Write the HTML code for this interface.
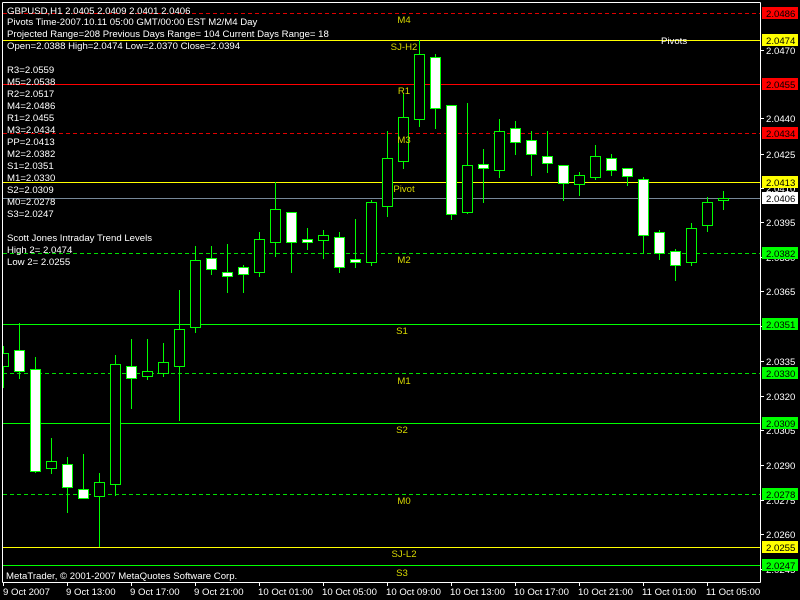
<!DOCTYPE html>
<html><head><meta charset="utf-8"><style>
html,body{margin:0;padding:0;background:#000;}
svg{display:block;}
text{font-family:"Liberation Sans","DejaVu Sans",sans-serif;font-size:9.6px;}
</style></head><body>
<svg width="800" height="600" viewBox="0 0 800 600" xmlns="http://www.w3.org/2000/svg">
<rect width="800" height="600" fill="#000"/>
<g shape-rendering="crispEdges">
<line x1="2.5" y1="2.5" x2="760.5" y2="2.5" stroke="#fff"/>
<line x1="760.5" y1="2.5" x2="760.5" y2="582.5" stroke="#fff"/>
<line x1="2.5" y1="582.5" x2="760.5" y2="582.5" stroke="#fff"/>
<line x1="3" y1="13.5" x2="760" y2="13.5" stroke="#e00000" stroke-dasharray="4,3"/>
<line x1="3" y1="40.5" x2="760" y2="40.5" stroke="#ffff00"/>
<line x1="3" y1="84.5" x2="760" y2="84.5" stroke="#ff0000"/>
<line x1="3" y1="133.5" x2="760" y2="133.5" stroke="#e00000" stroke-dasharray="4,3"/>
<line x1="3" y1="182.5" x2="760" y2="182.5" stroke="#ffff00"/>
<line x1="3" y1="198.5" x2="760" y2="198.5" stroke="#778899"/>
<line x1="3" y1="253.5" x2="760" y2="253.5" stroke="#00e000" stroke-dasharray="4,3"/>
<line x1="3" y1="324.5" x2="760" y2="324.5" stroke="#00ff00"/>
<line x1="3" y1="373.5" x2="760" y2="373.5" stroke="#00e000" stroke-dasharray="4,3"/>
<line x1="3" y1="423.5" x2="760" y2="423.5" stroke="#00ff00"/>
<line x1="3" y1="494.5" x2="760" y2="494.5" stroke="#00e000" stroke-dasharray="4,3"/>
<line x1="3" y1="547.5" x2="760" y2="547.5" stroke="#ffff00"/>
<line x1="3" y1="565.5" x2="760" y2="565.5" stroke="#00ff00"/>
</g>
<g stroke="#00ff00" stroke-width="1" shape-rendering="crispEdges">
<line x1="3.5" y1="346" x2="3.5" y2="388"/><rect x="-1.5" y="353.5" width="10" height="13" fill="#000"/>
<line x1="19.5" y1="323" x2="19.5" y2="379"/><rect x="14.5" y="350.5" width="10" height="21" fill="#fff"/>
<line x1="35.5" y1="357" x2="35.5" y2="473"/><rect x="30.5" y="369.5" width="10" height="102" fill="#fff"/>
<line x1="51.5" y1="438" x2="51.5" y2="474"/><rect x="46.5" y="461.5" width="10" height="7" fill="#000"/>
<line x1="67.5" y1="457" x2="67.5" y2="513"/><rect x="62.5" y="464.5" width="10" height="23" fill="#fff"/>
<line x1="83.5" y1="454" x2="83.5" y2="498"/><rect x="78.5" y="489.5" width="10" height="9" fill="#fff"/>
<line x1="99.5" y1="473" x2="99.5" y2="547"/><rect x="94.5" y="482.5" width="10" height="14" fill="#000"/>
<line x1="115.5" y1="355" x2="115.5" y2="496"/><rect x="110.5" y="364.5" width="10" height="120" fill="#000"/>
<line x1="131.5" y1="339" x2="131.5" y2="409"/><rect x="126.5" y="366.5" width="10" height="12" fill="#fff"/>
<line x1="147.5" y1="339" x2="147.5" y2="380"/><rect x="142.5" y="371.5" width="10" height="5" fill="#000"/>
<line x1="163.5" y1="343" x2="163.5" y2="377"/><rect x="158.5" y="362.5" width="10" height="11" fill="#000"/>
<line x1="179.5" y1="290" x2="179.5" y2="421"/><rect x="174.5" y="329.5" width="10" height="37" fill="#000"/>
<line x1="195.5" y1="246" x2="195.5" y2="333"/><rect x="190.5" y="260.5" width="10" height="67" fill="#000"/>
<line x1="211.5" y1="246" x2="211.5" y2="275"/><rect x="206.5" y="258.5" width="10" height="11" fill="#fff"/>
<line x1="227.5" y1="244" x2="227.5" y2="293"/><rect x="222.5" y="272.5" width="10" height="4" fill="#fff"/>
<line x1="243.5" y1="265" x2="243.5" y2="293"/><rect x="238.5" y="267.5" width="10" height="7" fill="#fff"/>
<line x1="259.5" y1="232" x2="259.5" y2="277"/><rect x="254.5" y="239.5" width="10" height="33" fill="#000"/>
<line x1="275.5" y1="182" x2="275.5" y2="257"/><rect x="270.5" y="209.5" width="10" height="33" fill="#000"/>
<line x1="291.5" y1="212" x2="291.5" y2="273"/><rect x="286.5" y="212.5" width="10" height="30" fill="#fff"/>
<line x1="307.5" y1="228" x2="307.5" y2="250"/><rect x="302.5" y="239.5" width="10" height="3" fill="#fff"/>
<line x1="323.5" y1="230" x2="323.5" y2="259"/><rect x="318.5" y="235.5" width="10" height="5" fill="#000"/>
<line x1="339.5" y1="232" x2="339.5" y2="273"/><rect x="334.5" y="237.5" width="10" height="30" fill="#fff"/>
<line x1="355.5" y1="219" x2="355.5" y2="268"/><rect x="350.5" y="259.5" width="10" height="3" fill="#fff"/>
<line x1="371.5" y1="200" x2="371.5" y2="266"/><rect x="366.5" y="202.5" width="10" height="60" fill="#000"/>
<line x1="387.5" y1="131" x2="387.5" y2="217"/><rect x="382.5" y="158.5" width="10" height="48" fill="#000"/>
<line x1="403.5" y1="93" x2="403.5" y2="169"/><rect x="398.5" y="117.5" width="10" height="44" fill="#000"/>
<line x1="419.5" y1="40" x2="419.5" y2="127"/><rect x="414.5" y="54.5" width="10" height="65" fill="#000"/>
<line x1="435.5" y1="54" x2="435.5" y2="129"/><rect x="430.5" y="57.5" width="10" height="51" fill="#fff"/>
<line x1="451.5" y1="105" x2="451.5" y2="220"/><rect x="446.5" y="105.5" width="10" height="109" fill="#fff"/>
<line x1="467.5" y1="103" x2="467.5" y2="214"/><rect x="462.5" y="165.5" width="10" height="47" fill="#000"/>
<line x1="483.5" y1="149" x2="483.5" y2="203"/><rect x="478.5" y="164.5" width="10" height="4" fill="#fff"/>
<line x1="499.5" y1="119" x2="499.5" y2="178"/><rect x="494.5" y="131.5" width="10" height="39" fill="#000"/>
<line x1="515.5" y1="121" x2="515.5" y2="155"/><rect x="510.5" y="128.5" width="10" height="14" fill="#fff"/>
<line x1="531.5" y1="131" x2="531.5" y2="176"/><rect x="526.5" y="140.5" width="10" height="14" fill="#fff"/>
<line x1="547.5" y1="131" x2="547.5" y2="173"/><rect x="542.5" y="156.5" width="10" height="7" fill="#fff"/>
<line x1="563.5" y1="165" x2="563.5" y2="201"/><rect x="558.5" y="165.5" width="10" height="18" fill="#fff"/>
<line x1="579.5" y1="172" x2="579.5" y2="196"/><rect x="574.5" y="175.5" width="10" height="9" fill="#000"/>
<line x1="595.5" y1="145" x2="595.5" y2="180"/><rect x="590.5" y="156.5" width="10" height="21" fill="#000"/>
<line x1="611.5" y1="154" x2="611.5" y2="176"/><rect x="606.5" y="158.5" width="10" height="12" fill="#fff"/>
<line x1="627.5" y1="168" x2="627.5" y2="186"/><rect x="622.5" y="168.5" width="10" height="8" fill="#fff"/>
<line x1="643.5" y1="177" x2="643.5" y2="253"/><rect x="638.5" y="179.5" width="10" height="56" fill="#fff"/>
<line x1="659.5" y1="230" x2="659.5" y2="260"/><rect x="654.5" y="232.5" width="10" height="21" fill="#fff"/>
<line x1="675.5" y1="249" x2="675.5" y2="281"/><rect x="670.5" y="251.5" width="10" height="14" fill="#fff"/>
<line x1="691.5" y1="223" x2="691.5" y2="266"/><rect x="686.5" y="228.5" width="10" height="34" fill="#000"/>
<line x1="707.5" y1="197" x2="707.5" y2="232"/><rect x="702.5" y="202.5" width="10" height="23" fill="#000"/>
<line x1="723.5" y1="191" x2="723.5" y2="210"/><rect x="718.5" y="198.5" width="10" height="2" fill="#000"/>
</g>
<rect x="0" y="0" width="2" height="600" fill="#000"/>
<line x1="2.5" y1="2.5" x2="2.5" y2="582.5" stroke="#fff" shape-rendering="crispEdges"/>
<g fill="#d8d800" text-anchor="middle">
<text x="404" y="23">M4</text>
<text x="404" y="50">SJ-H2</text>
<text x="404" y="94">R1</text>
<text x="404" y="143">M3</text>
<text x="404" y="192">Pivot</text>
<text x="404" y="263">M2</text>
<text x="402" y="334">S1</text>
<text x="404" y="384">M1</text>
<text x="402" y="433">S2</text>
<text x="404" y="504">M0</text>
<text x="404" y="557">SJ-L2</text>
<text x="402" y="576">S3</text>
</g>
<text x="661" y="44" fill="#ffffff">Pivots</text>
<g fill="#ffffff">
<text x="7" y="14">GBPUSD,H1  2.0405 2.0409 2.0401 2.0406</text>
<text x="7" y="25">Pivots Time-2007.10.11 05:00 GMT/00:00 EST M2/M4 Day</text>
<text x="7" y="37">Projected Range=208 Previous Days Range= 104 Current Days Range= 18</text>
<text x="7" y="49">Open=2.0388 High=2.0474 Low=2.0370 Close=2.0394</text>
<text x="7" y="73">R3=2.0559</text>
<text x="7" y="85">M5=2.0538</text>
<text x="7" y="97">R2=2.0517</text>
<text x="7" y="109">M4=2.0486</text>
<text x="7" y="121">R1=2.0455</text>
<text x="7" y="133">M3=2.0434</text>
<text x="7" y="145">PP=2.0413</text>
<text x="7" y="157">M2=2.0382</text>
<text x="7" y="169">S1=2.0351</text>
<text x="7" y="181">M1=2.0330</text>
<text x="7" y="193">S2=2.0309</text>
<text x="7" y="205">M0=2.0278</text>
<text x="7" y="217">S3=2.0247</text>
<text x="7" y="241">Scott Jones Intraday Trend Levels</text>
<text x="7" y="253">High 2= 2.0474</text>
<text x="7" y="265">Low 2= 2.0255</text>
<text x="6" y="579">MetaTrader, © 2001-2007 MetaQuotes Software Corp.</text>
</g>
<g fill="#ffffff" shape-rendering="crispEdges">
<rect x="761" y="50" width="3" height="1"/><text x="766" y="54">2.0470</text>
<rect x="761" y="118" width="3" height="1"/><text x="766" y="122">2.0440</text>
<rect x="761" y="154" width="3" height="1"/><text x="766" y="158">2.0425</text>
<rect x="761" y="188" width="3" height="1"/><text x="766" y="192">2.0410</text>
<rect x="761" y="222" width="3" height="1"/><text x="766" y="226">2.0395</text>
<rect x="761" y="257" width="3" height="1"/><text x="766" y="261">2.0380</text>
<rect x="761" y="291" width="3" height="1"/><text x="766" y="295">2.0365</text>
<rect x="761" y="326" width="3" height="1"/><text x="766" y="330">2.0350</text>
<rect x="761" y="361" width="3" height="1"/><text x="766" y="365">2.0335</text>
<rect x="761" y="396" width="3" height="1"/><text x="766" y="400">2.0320</text>
<rect x="761" y="430" width="3" height="1"/><text x="766" y="434">2.0305</text>
<rect x="761" y="465" width="3" height="1"/><text x="766" y="469">2.0290</text>
<rect x="761" y="500" width="3" height="1"/><text x="766" y="504">2.0275</text>
<rect x="761" y="534" width="3" height="1"/><text x="766" y="538">2.0260</text>
<rect x="761" y="569" width="3" height="1"/><text x="766" y="573">2.0245</text>
</g>
<g shape-rendering="crispEdges">
<rect x="762" y="7" width="36" height="12" fill="#ff0000"/>
<rect x="762" y="34" width="36" height="12" fill="#ffff00"/>
<rect x="762" y="78" width="36" height="12" fill="#ff0000"/>
<rect x="762" y="127" width="36" height="12" fill="#ff0000"/>
<rect x="762" y="176" width="36" height="12" fill="#ffff00"/>
<rect x="762" y="192" width="36" height="12" fill="#ffffff"/>
<rect x="762" y="247" width="36" height="12" fill="#00ff00"/>
<rect x="762" y="318" width="36" height="12" fill="#00ff00"/>
<rect x="762" y="367" width="36" height="12" fill="#00ff00"/>
<rect x="762" y="417" width="36" height="12" fill="#00ff00"/>
<rect x="762" y="488" width="36" height="12" fill="#00ff00"/>
<rect x="762" y="541" width="36" height="12" fill="#ffff00"/>
<rect x="762" y="559" width="36" height="12" fill="#00ff00"/>
</g>
<g fill="#000">
<text x="766" y="17">2.0486</text>
<text x="766" y="44">2.0474</text>
<text x="766" y="88">2.0455</text>
<text x="766" y="137">2.0434</text>
<text x="766" y="186">2.0413</text>
<text x="766" y="202">2.0406</text>
<text x="766" y="257">2.0382</text>
<text x="766" y="328">2.0351</text>
<text x="766" y="377">2.0330</text>
<text x="766" y="427">2.0309</text>
<text x="766" y="498">2.0278</text>
<text x="766" y="551">2.0255</text>
<text x="766" y="569">2.0247</text>
</g>
<g fill="#ffffff" shape-rendering="crispEdges">
<rect x="3" y="583" width="1" height="3"/><text x="3" y="595">9 Oct 2007</text>
<rect x="67" y="583" width="1" height="3"/><text x="66" y="595">9 Oct 13:00</text>
<rect x="131" y="583" width="1" height="3"/><text x="130" y="595">9 Oct 17:00</text>
<rect x="195" y="583" width="1" height="3"/><text x="194" y="595">9 Oct 21:00</text>
<rect x="259" y="583" width="1" height="3"/><text x="258" y="595">10 Oct 01:00</text>
<rect x="323" y="583" width="1" height="3"/><text x="322" y="595">10 Oct 05:00</text>
<rect x="387" y="583" width="1" height="3"/><text x="386" y="595">10 Oct 09:00</text>
<rect x="451" y="583" width="1" height="3"/><text x="450" y="595">10 Oct 13:00</text>
<rect x="515" y="583" width="1" height="3"/><text x="514" y="595">10 Oct 17:00</text>
<rect x="579" y="583" width="1" height="3"/><text x="578" y="595">10 Oct 21:00</text>
<rect x="643" y="583" width="1" height="3"/><text x="642" y="595">11 Oct 01:00</text>
<rect x="707" y="583" width="1" height="3"/><text x="706" y="595">11 Oct 05:00</text>
</g>
</svg>
</body></html>
